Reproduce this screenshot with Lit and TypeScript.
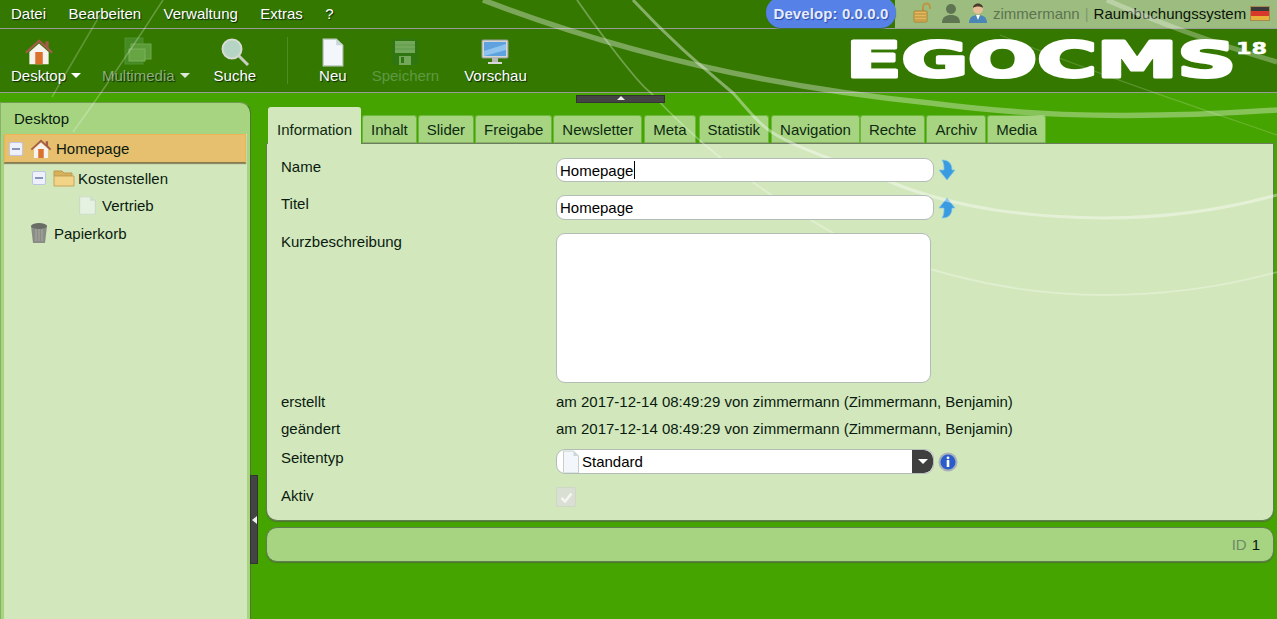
import { LitElement, html, css, svg } from "lit";
import { customElement } from "lit/decorators.js";

const doc = (w = 20, h = 24, op = 1) => html`<svg width=${w} height=${h} viewBox="0 0 20 24" preserveAspectRatio="none" style="opacity:${op}"><path d="M2.500 1h10l5 5v17h-15z" fill="#f3f7fb" stroke="#c5d0cc"/><path d="M12.500 1v5h5z" fill="#c9d6da"/></svg>`;
const house = (s = 28) => html`<svg width=${s} height=${s} viewBox="0 0 28 28"><path d="M1 14 14 2l6 5.500V4h3v6l4 4-1.500 1.500L14 5 2.500 15.500z" fill="#a35b4a"/><path d="M5 14 14 6l9 8v11.500H5z" fill="#f6f3ee"/><rect x="10.500" y="14" width="7" height="11.500" fill="#d9722c"/></svg>`;
const minus = () => html`<span class="minus"><i></i></span>`;
const TABS: [string, number][] = [["Inhalt", 0], ["Slider", 0], ["Freigabe", 0], ["Newsletter", 0], ["Meta", 1], ["Statistik", 2], ["Navigation", 1], ["Rechte", -1], ["Archiv", 0], ["Media", 0]];

@customElement("app-root")
export class AppRoot extends LitElement {
  static styles = css`
    :host { display: block; position: relative; width: 1277px; height: 619px; overflow: hidden; background: #46a400; font: 15px/17px "Liberation Sans", Arial, sans-serif; color: #0a1a10; }
    .swoosh { position: absolute; inset: 0; z-index: 5; pointer-events: none; }
    .menubar { background: #347800; border-bottom: 1px solid #9a9a98; display: flex; align-items: center; position: relative; padding-bottom: 2px; height: 26px; }
    .menu { display: flex; gap: 22.500px; padding-left: 11px; color: #fff; text-shadow: 1px 1px 1px #0a2a00; }
    .session { position: absolute; right: 0; top: 0; height: 28px; width: 382px; background: #9dbd80; display: flex; align-items: center; padding: 0 0 2px 17px; box-sizing: border-box; }
    .session .user { color: #5c7350; margin-left: 5px; }
    .session .sep { color: #7e9a6a; margin: 0 5px 0 5px; }
    .session .sys { color: #0b130a; margin-right: 4px; }
    .session svg { flex: none; }
    .session .ic { margin-right: 7px; }
    .develop { position: absolute; left: 766px; top: -3px; z-index: 6; height: 31px; width: 130px; border-radius: 16px; background: #5682e8; color: #e4ecff; font-weight: 700; font-size: 15px; display: flex; align-items: center; justify-content: center; box-sizing: border-box; text-shadow: 1px 1px 1px #2a4aa8; letter-spacing: .1px; box-shadow: 0 1px 1px #3d6a30; padding-top: 1px; }
    .toolbar { height: 63px; background: #347800; border-bottom: 1px solid #9a9a98; display: flex; position: relative; color: #fff; text-shadow: 1px 1px 1px #0a2a00; }
    .tool { position: relative; width: max-content; display: flex; flex-direction: column; align-items: center; padding-top: 9px; box-sizing: border-box; }
    .tool .i { height: 28px; display: flex; align-items: center; justify-content: center; }
    .tool .t { margin-top: 1px; white-space: nowrap; display: flex; align-items: center; gap: 5px; }
    .caret { width: 0; height: 0; border: 5px solid transparent; border-top: 5px solid #fff; border-bottom: 0; margin-right: -15px; }
    .off { color: #8eb07a; }
    .off.deep { color: #5f9844; text-shadow: none; }
    .off .caret { border-top-color: #dfe8d8; }
    .divider { width: 1px; height: 47px; background: #4f8c28; margin-top: 8px; }
    .logo { position: absolute; left: 840px; top: 7px; text-shadow: none; z-index: 6; }
    .main { display: flex; height: 526px; position: relative; }
    .side { width: 251px; flex: none; margin-top: 9px; border-top-right-radius: 11px; background: #a6d481; padding: 0 3px; box-sizing: border-box; border-right: 1px solid #4a7a2a; border-top: 1px solid #6f9a50; border-left: 1px solid #8ab068; display: flex; flex-direction: column; }
    .side-h { height: 31px; display: flex; align-items: center; padding-left: 10px; flex: none; }
    .tree { flex: 1; background: #d2e8bc; }
    .row { display: flex; align-items: center; position: relative; }
    .sel { height: 29px; background: #e6c06e; border: 1px solid #eeb454; border-bottom-color: #8a7a4a; box-shadow: 0 1px 1px #8c8c6a; box-sizing: border-box; padding-left: 4px; width: 242px; margin-bottom: 1px; z-index: 6; }
    .sel svg { margin: 0 4px 0 7px; }
    .minus { width: 14px; height: 14px; background: #eef1fb; border: 1px solid #bcc6e2; display: flex; align-items: center; justify-content: center; box-sizing: border-box; border-radius: 2px; flex: none; }
    .minus i { width: 8px; height: 2px; background: #8595bb; }
    .r2 { height: 28px; padding-left: 28px; }
    .r2 svg { margin: 0 3px 0 7px; }
    .r3 { height: 26px; padding-left: 73px; }
    .r3 svg { margin-right: 4px; }
    .r4 { height: 30px; padding-left: 24px; }
    .r4 svg { margin-right: 4px; }
    .vsplit { position: absolute; left: 250px; top: 382px; width: 8px; height: 89px; background: #444; border: 1px solid #333; box-sizing: border-box; display: flex; align-items: center; z-index: 6; }
    .vsplit i { width: 0; height: 0; border: 4px solid transparent; border-right: 5px solid #eee; border-left: 0; margin-left: 1px; }
    .hsplit { position: absolute; left: 576px; top: 2px; width: 89px; height: 8px; background: #444; border: 1px solid #333; box-sizing: border-box; display: flex; justify-content: center; z-index: 6; }
    .hsplit i { width: 0; height: 0; border: 4px solid transparent; border-bottom: 4px solid #eee; border-top: 0; }
    .content { flex: 1; padding: 14px 3px 0 15px; min-width: 0; }
    .tabs { display: flex; gap: 1px; padding-left: 2px; height: 36px; align-items: flex-end; position: relative; z-index: 1; }
    .tab { height: 28px; padding: 0 8px; background: #a6d481; border: 1px solid #6cb83a; border-bottom: 0; border-radius: 3px 3px 0 0; display: flex; align-items: center; box-sizing: border-box; color: #0f2a10; box-shadow: inset 0 -1px 0 #8ab068; }
    .tab.on { height: 37px; margin-bottom: -1px; background: #d2e8bc; border-color: #d2e8bc; box-shadow: none; padding-top: 6px; }
    .panel { height: 378px; background: #d2e8bc; border: 1px solid #5f7f50; border-top: 1px solid #6b7f60; border-radius: 0 0 11px 11px; box-shadow: 0 1px 1px #4a7a2a; box-sizing: border-box; padding: 14px 0 0 14px; display: flex; flex-direction: column; }
    .f { display: grid; grid-template-columns: 275px 1fr; align-items: start; }
    .f .val { display: flex; align-items: center; }
    .h24 { height: 24px; margin-bottom: 13px; }
    .h25 { height: 25px; margin-bottom: 13px; }
    .h150 { height: 150px; margin-bottom: 10px; }
    .h17 { height: 17px; margin-bottom: 10px; }
    .hs { height: 25px; margin-bottom: 13px; margin-top: 2px; }
    .wrap { position: relative; display: flex; z-index: 6; }
    input, textarea { font: 15px "Liberation Sans", Arial, sans-serif; color: #000; border: 1px solid #b4bcb8; background: #fff; border-radius: 9px; padding: 0 3px; width: 378px; box-sizing: border-box; outline: none; margin: 0; position: relative; z-index: 6; }
    .h24 input { height: 24px; }
    .h25 input { height: 25px; }
    textarea { width: 375px; height: 150px; resize: none; display: block; }
    .cur { position: absolute; left: 78px; top: 3px; width: 1px; height: 18px; background: #000; z-index: 7; }
    .arrow { margin-left: 4px; }
    .select { width: 378px; height: 25px; background: #fff; border: 1px solid #b4bcb8; border-radius: 9px; box-sizing: border-box; display: flex; align-items: center; overflow: hidden; padding-left: 4px; gap: 1px; position: relative; z-index: 6; }
    .select .tx { flex: 1; color: #000; }
    .select .btn { width: 21px; height: 100%; background: #3f3f3f; border-radius: 0 9px 9px 0; display: flex; align-items: center; justify-content: center; flex: none; }
    .select .btn i { width: 0; height: 0; border: 5px solid transparent; border-top: 5px solid #fff; border-bottom: 0; }
    .chk { width: 20px; height: 20px; background: #d9dfd3; border: 1px solid #cfd7c8; box-sizing: border-box; border-radius: 2px; display: flex; align-items: center; justify-content: center; }
    .foot { margin-top: 6px; height: 35px; background: #a6d481; border: 1px solid #5f7f50; border-radius: 11px; box-sizing: border-box; box-shadow: 0 1px 1px #4a7a2a; display: flex; align-items: center; justify-content: flex-end; padding-right: 13px; }
    .foot span { color: #6f8a68; margin-right: 5px; }
    .foot b { font-weight: 400; color: #0a1a10; }
  `;

  private swoosh() {
    return svg`
      <g fill="none" stroke="#fff">
        <path d="M52 97 L100 15" stroke-opacity=".22" stroke-width="1.500" />
        <path d="M163 0 Q118 70 73 132" stroke-opacity=".25" stroke-width="1.500"/>
        <path d="M483 0 C600 45 750 85 930 103 C1000 112 1100 122 1277 110" stroke-opacity=".35" stroke-width="5.500"/>
        <path d="M577 0 C610 47 640 85 650 92 C690 135 740 180 833 233 C920 272 1010 295 1103 295 C1170 295 1230 285 1277 272" stroke-opacity=".3" stroke-width="1.800"/>
        <path d="M633 0 C670 40 700 65 733 93 C750 112 760 125 773 133 C800 150 850 165 893 183 C960 210 1040 218 1103 218 C1170 218 1230 208 1277 195" stroke-opacity=".4" stroke-width="3"/>
        <path d="M1000 35 C1100 75 1190 105 1277 135" stroke-opacity=".18" stroke-width="1.200"/>
        <path d="M1107 0 C1170 28 1230 48 1277 62" stroke-opacity=".3" stroke-width="5"/>
      </g>`;
  }

  render() {
    return html`
      <div class="menubar">
        <div class="menu"><span>Datei</span><span>Bearbeiten</span><span>Verwaltung</span><span>Extras</span><span>?</span></div>
        <div class="session">
          <svg class="ic" width="22" height="22" viewBox="0 0 22 22"><path d="M11 9V5a3.500 3.500 0 0 1 7 0v2" fill="none" stroke="#c09540" stroke-width="2"/><rect x="2" y="9" width="13" height="11" rx="1" fill="#e2b95e" stroke="#a9802f"/><path d="M3 12h11M3 15h11M3 18h11" stroke="#b58a3a"/></svg>
          <svg class="ic" width="20" height="22" viewBox="0 0 20 22"><circle cx="10" cy="7" r="5" fill="#5f7551"/><path d="M1 21c0-6 4-8 9-8s9 2 9 8z" fill="#5f7551"/></svg>
          <svg width="20" height="22" viewBox="0 0 20 22"><circle cx="10" cy="7" r="5" fill="#e8bf98"/><path d="M5 6c0-6 10-6 10 0-2-2-8-2-10 0z" fill="#4a3a2a"/><path d="M1 21c0-6 4-8 9-8s9 2 9 8z" fill="#4a86b8"/><path d="M8 13h4l-2 5z" fill="#fff"/></svg>
          <span class="user">zimmermann</span><span class="sep">|</span><span class="sys">Raumbuchungssystem</span>
          <svg width="20" height="15" viewBox="0 0 20 15"><rect width="20" height="5" fill="#3a3a3a"/><rect y="5" width="20" height="5" fill="#d8392a"/><rect y="10" width="20" height="5" fill="#e8b23a"/><rect x=".5" y=".5" width="19" height="14" fill="none" stroke="#a88a50"/></svg>
        </div>
      </div>
      <div class="develop">Develop: 0.0.0.0</div>
      <div class="toolbar">
        <div class="tool" style="margin-left:11px">
          <div class="i">${house(30)}</div>
          <div class="t">Desktop<span class="caret"></span></div>
        </div>
        <div class="tool off" style="margin-left:36px">
          <div class="i"><svg width="30" height="30" viewBox="0 0 30 30"><rect x="2" y="1" width="18" height="26" fill="#458a22" stroke="#4f9230"/><rect x="8" y="7" width="20" height="15" fill="#5a9a38" stroke="#6ca84a"/><rect x="6" y="12" width="16" height="12" fill="#66a444" stroke="#7ab25a"/></svg></div>
          <div class="t">Multimedia<span class="caret"></span></div>
        </div>
        <div class="tool" style="margin-left:39px">
          <div class="i"><svg width="30" height="30" viewBox="0 0 30 30"><line x1="19" y1="19" x2="28" y2="28" stroke="#c8cec4" stroke-width="3"/><circle cx="12" cy="12" r="9.500" fill="#b5d4c4" stroke="#d6dcd2" stroke-width="2"/></svg></div>
          <div class="t">Suche</div>
        </div>
        <div class="divider" style="margin-left:31px"></div>
        <div class="tool" style="margin-left:31px">
          <div class="i">${doc(26, 29)}</div>
          <div class="t">Neu</div>
        </div>
        <div class="tool off deep" style="margin-left:25px">
          <div class="i"><svg width="28" height="28" viewBox="0 0 28 28"><rect x="1" y="1" width="26" height="26" rx="2" fill="#2f7510"/><rect x="4" y="3" width="20" height="12" fill="#73a85a"/><path d="M4 7h20M4 11h20" stroke="#5f9a48"/><rect x="8" y="18" width="12" height="9" fill="#73a85a"/><rect x="10" y="19" width="3" height="6" fill="#2f7510"/></svg></div>
          <div class="t">Speichern</div>
        </div>
        <div class="tool" style="margin-left:25px">
          <div class="i"><svg width="28" height="26" viewBox="0 0 28 26"><rect x="1" y="1" width="26" height="18" rx="1" fill="#d4d6d6" stroke="#9a9c9c"/><rect x="3" y="3" width="22" height="14" fill="#5ea2e0"/><path d="M3 12 25 5v6L3 17z" fill="#8ec4ee"/><rect x="11" y="19" width="6" height="4" fill="#b8b8b8"/><rect x="7" y="23" width="14" height="2" fill="#d8d8d8"/></svg></div>
          <div class="t">Vorschau</div>
        </div>
        <svg class="logo" width="437" height="56" viewBox="0 0 437 56">
          <text x="6" y="41" font-family="DejaVu Sans" font-weight="700" font-size="49" fill="#fff" stroke="#fff" stroke-width="3" stroke-linejoin="round" textLength="390" lengthAdjust="spacingAndGlyphs">EGOCMS</text>
          <text x="396" y="18" font-family="DejaVu Sans" font-weight="700" font-size="16" fill="#fff" stroke="#fff" stroke-width=".5" textLength="31" lengthAdjust="spacingAndGlyphs">18</text>
        </svg>
      </div>
      <div class="main">
        <div class="hsplit"><i></i></div>
        <div class="side">
          <div class="side-h">Desktop</div>
          <div class="tree">
            <div class="row sel">${minus()}${house(22)}<span>Homepage</span></div>
            <div class="row r2">${minus()}
              <svg width="22" height="20" viewBox="0 0 22 20"><path d="M1 3h8l2 2h8v3H1z" fill="#d8b05a" stroke="#bd9a4e"/><path d="M1 18V8h20v10z" fill="#f2d488" stroke="#c8a458"/></svg>
              <span>Kostenstellen</span></div>
            <div class="row r3">${doc(21, 19, .6)}<span>Vertrieb</span></div>
            <div class="row r4">
              <svg width="22" height="22" viewBox="0 0 22 22"><path d="M3 4h16l-2 17H5z" fill="#8a8c86"/><ellipse cx="11" cy="4" rx="8" ry="3" fill="#6a6c66"/><path d="M8 7v12M11 7v12M14 7v12" stroke="#a8aaa2"/></svg>
              <span>Papierkorb</span></div>
          </div>
        </div>
        <div class="vsplit"><i></i></div>
        <div class="content">
          <div class="tabs">
            <div class="tab on">Information</div>
            ${TABS.map(([t, d]) => html`<div class="tab" style="margin-left:${d}px">${t}</div>`)}
          </div>
          <div class="panel">
            <div class="f h24"><span>Name</span><div class="val"><div class="wrap"><input readonly .value=${"Homepage"} /><span class="cur"></span></div>
              <svg class="arrow" width="18" height="22" viewBox="0 0 18 22"><path d="M4 1C10 1 14 4 14 11h3L9 21 1 11h5C6 7 6 4 4 1z" fill="#3a9be0" stroke="#7cc4ee" stroke-width=".7"/></svg></div></div>
            <div class="f h25"><span>Titel</span><div class="val"><input readonly .value=${"Homepage"} />
              <svg class="arrow" width="18" height="22" viewBox="0 0 18 22"><path d="M4 21C10 21 14 18 14 11h3L9 1 1 11h5C6 15 6 18 4 21z" fill="#3a9be0" stroke="#7cc4ee" stroke-width=".7"/></svg></div></div>
            <div class="f h150"><span>Kurzbeschreibung</span><div class="val"><textarea readonly></textarea></div></div>
            <div class="f h17"><span>erstellt</span><span>am 2017-12-14 08:49:29 von zimmermann (Zimmermann, Benjamin)</span></div>
            <div class="f h17"><span>geändert</span><span>am 2017-12-14 08:49:29 von zimmermann (Zimmermann, Benjamin)</span></div>
            <div class="f hs"><span>Seitentyp</span><div class="val">
              <div class="select">${doc(20, 24)}<span class="tx">Standard</span><span class="btn"><i></i></span></div>
              <svg style="margin-left:4px" width="20" height="20" viewBox="0 0 20 20"><circle cx="10" cy="10" r="9.500" fill="#a8b0b8"/><circle cx="10" cy="10" r="7.500" fill="#2a5ccc"/><circle cx="10" cy="5.800" r="1.400" fill="#fff"/><rect x="8.700" y="8" width="2.600" height="7" fill="#fff"/></svg>
            </div></div>
            <div class="f"><span>Aktiv</span><div class="chk"><svg width="13" height="11" viewBox="0 0 13 11"><path d="M1.500 6 5 9.500 11.500 1.500" fill="none" stroke="#f4f6f2" stroke-width="2.500"/></svg></div></div>
          </div>
          <div class="foot"><span>ID</span><b>1</b></div>
        </div>
      </div>
      <svg class="swoosh" width="1277" height="619" viewBox="0 0 1277 619">${this.swoosh()}</svg>
    `;
  }
}
